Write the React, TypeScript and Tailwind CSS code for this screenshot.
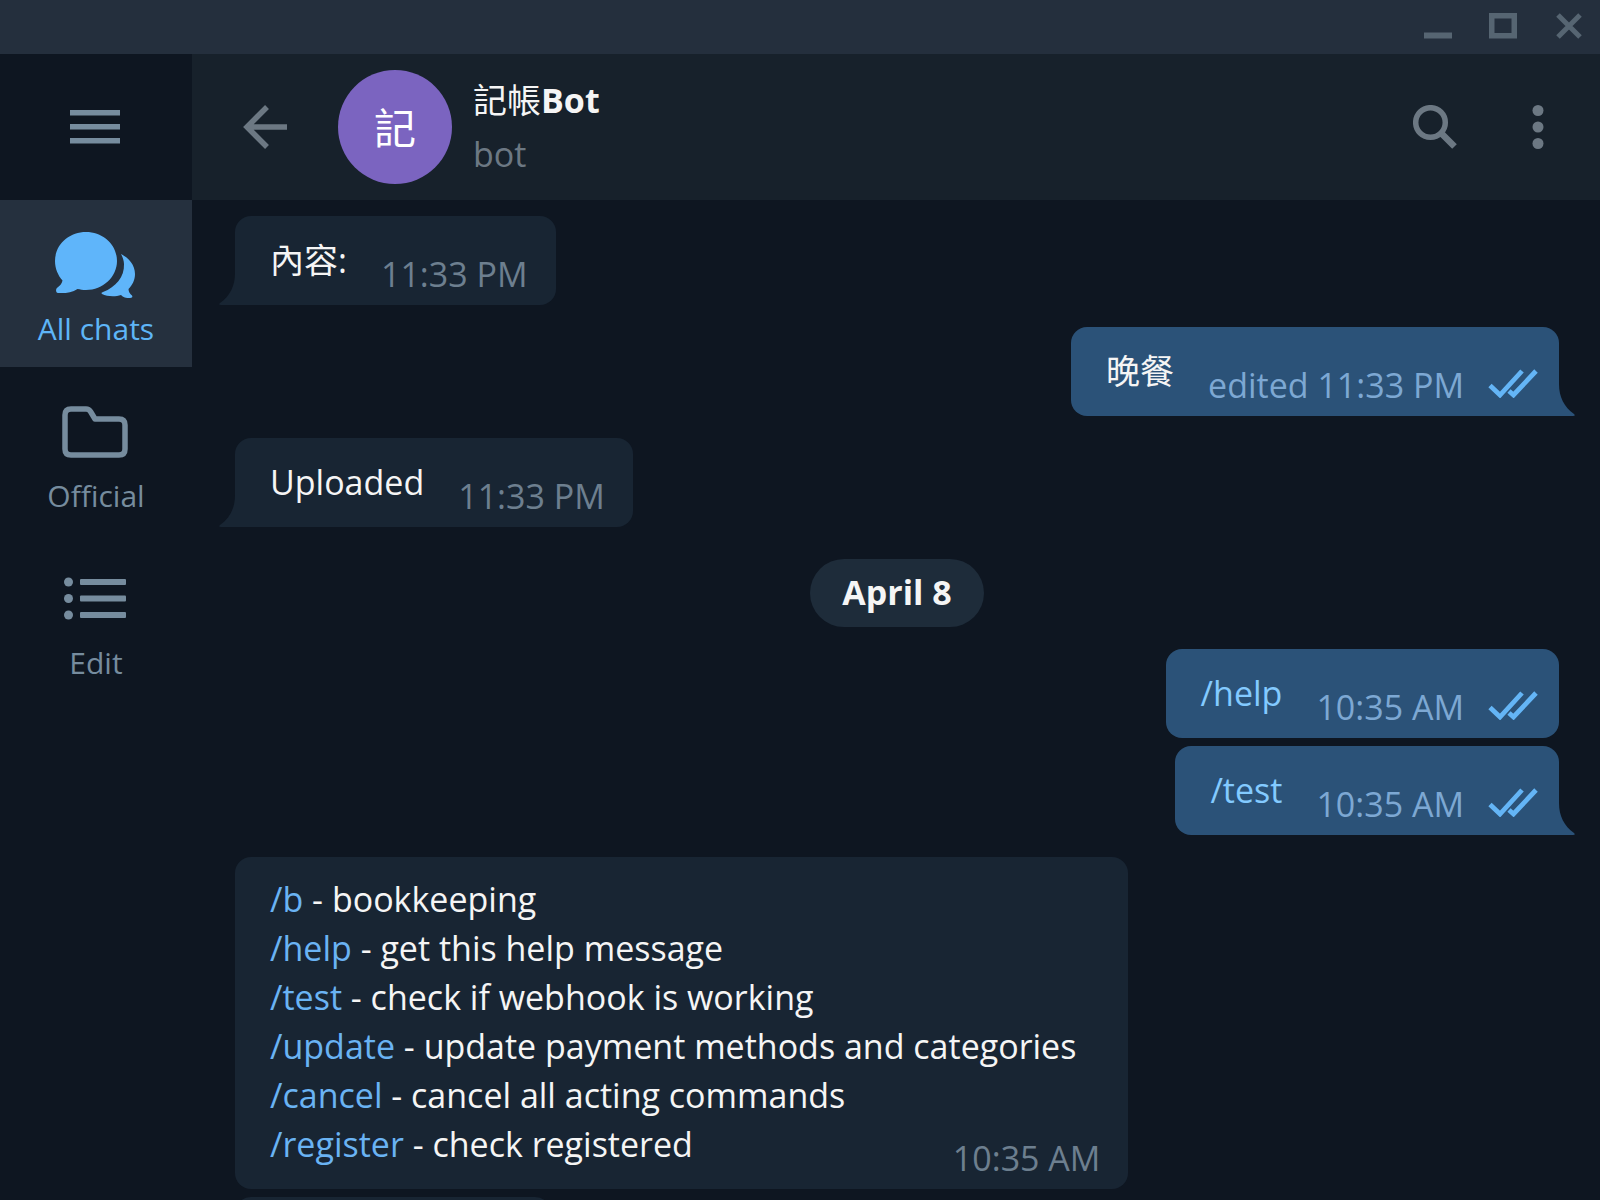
import React from "react";

type Line = { command?: string; text?: string };

type Message = {
  id: number;
  out?: boolean;
  tail?: boolean;
  lines: Line[];
  edited?: boolean;
  time: string;
  gap: string;
};

const before: Message[] = [
  { id: 1, tail: true, lines: [{ text: "內容:" }], time: "11:33 PM", gap: "mt-4" },
  { id: 2, out: true, tail: true, lines: [{ text: "晚餐" }], edited: true, time: "11:33 PM", gap: "mt-[22px]" },
  { id: 3, tail: true, lines: [{ text: "Uploaded" }], time: "11:33 PM", gap: "mt-[22px]" },
];

const after: Message[] = [
  { id: 4, out: true, lines: [{ command: "/help" }], time: "10:35 AM", gap: "mt-[22px]" },
  { id: 5, out: true, tail: true, lines: [{ command: "/test" }], time: "10:35 AM", gap: "mt-2" },
  {
    id: 6,
    lines: [
      { command: "/b", text: " - bookkeeping" },
      { command: "/help", text: " - get this help message" },
      { command: "/test", text: " - check if webhook is working" },
      { command: "/update", text: " - update payment methods and categories" },
      { command: "/cancel", text: " - cancel all acting commands" },
      { command: "/register", text: " - check registered" },
    ],
    time: "10:35 AM",
    gap: "mt-[22px]",
  },
];

function Ticks() {
  return (
    <svg className="mb-3 ml-6 h-[29px] w-[50px] shrink-0" viewBox="0 0 50 29" fill="none" stroke="#64b5f6" strokeWidth="4.800" aria-label="Read">
      <path d="M2 16.500 L12 26 L34 2" />
      <path d="M21 22 L25.500 26 L48 2" />
    </svg>
  );
}

function Tail({ out }: { out?: boolean }) {
  return out ? (
    <svg className="absolute bottom-0 left-full h-8 w-4 fill-[#2b5278]" viewBox="0 0 16 32" aria-hidden="true">
      <path d="M0 0 C0 13 5 23 15 30 Q17 32 14 32 H0Z" />
    </svg>
  ) : (
    <svg className="absolute right-full bottom-0 h-8 w-4 fill-[#182533]" viewBox="0 0 16 32" aria-hidden="true">
      <path d="M16 0 C16 13 11 23 1 30 Q-1 32 2 32 H16Z" />
    </svg>
  );
}

function Bubble({ message }: { message: Message }) {
  const { out, tail, lines, edited, time, gap } = message;
  const tall = lines.length > 1;
  const corner = !tail ? "" : out ? "rounded-br-none" : "rounded-bl-none";
  return (
    <li className={`flex shrink-0 ${gap} ${out ? "justify-end" : "justify-start"}`}>
      <div
        className={`relative flex items-end rounded-2xl pl-[35px] ${corner} ${
          out ? "bg-[#2b5278] pr-[21px]" : "bg-[#182533] pr-7"
        } ${tall ? "pt-[18px] pb-5" : "py-5"}`}
      >
        {tail && <Tail out={out} />}
        <div className={tall ? "pr-6 text-[#f5f5f5]" : "text-[#f5f5f5]"}>
          {lines.map((line, i) => (
            <p key={i} className="whitespace-pre">
              {line.command && (
                <a href="#" className={out ? "text-[#83caff]" : "text-[#6ab3f3]"}>
                  {line.command}
                </a>
              )}
              {line.text}
            </p>
          ))}
        </div>
        <div
          className={`-mb-[14px] flex items-end whitespace-nowrap ${
            tall ? "absolute right-7 bottom-5" : "ml-[34px]"
          } ${out ? "text-[#7da8d3]" : "text-[#6d7f8f]"}`}
        >
          <time>{edited ? `edited ${time}` : time}</time>
          {out && <Ticks />}
        </div>
      </div>
    </li>
  );
}

function ChatsIcon() {
  return (
    <svg className="h-[66px] w-20" viewBox="0 0 80 66" fill="#5fb5fa" aria-hidden="true">
      <path d="M31 0 C48 0 62 12.500 62 29 C62 45 48 58 31 58 C28 58 25 57.500 22.500 57 C17 60.500 10 61.500 3 61 C0.500 60.500 0.500 57 2.500 55.500 C5 53.500 7 51.500 7.500 48.500 C3 43.500 0 36.500 0 29 C0 12.500 14 0 31 0Z" />
      <path d="M66 22 C74 26 80 33 80 42 C80 48 77.500 53 73.500 57 C73.500 60 75 62 77 63.500 C78 65 77 66 75 66 C71 66 68 65.500 66 63 C60 65 52 64.500 47 62 C46 61 46.500 60.500 48 60 C61 55 69.500 45 69 32 C69 28.500 67.500 25 66 22Z" />
    </svg>
  );
}

function FolderIcon() {
  return (
    <svg className="h-[52px] w-[66px]" viewBox="0 0 66 52" fill="none" stroke="#768c9e" strokeWidth="5.500" strokeLinejoin="round" aria-hidden="true">
      <path d="M9 3 H24 Q27 3 28.500 5.500 L33 13 H57 Q63 13 63 19 V43 Q63 49 57 49 H9 Q3 49 3 43 V9 Q3 3 9 3Z" />
    </svg>
  );
}

function ListIcon() {
  return (
    <svg className="h-[43px] w-[62px]" viewBox="0 0 62 43" fill="#768c9e" aria-hidden="true">
      {[5, 21.5, 38].map((y) => (
        <g key={y}>
          <circle cx="4.500" cy={y} r="4.500" />
          <rect x="16" y={y - 3} width="46" height="6" rx="1" />
        </g>
      ))}
    </svg>
  );
}

function SideTab({ label, active, children }: { label: string; active?: boolean; children: React.ReactNode }) {
  return (
    <button
      type="button"
      className={`flex h-[167px] w-full flex-col items-center pb-[18px] text-[30px] leading-10 font-medium ${
        active ? "bg-[#25303e] text-[#5eb5f7]" : "text-[#768c9e]"
      }`}
    >
      <span className="flex w-full flex-1 items-center justify-center pt-5 pr-[3px]">{children}</span>
      <span>{label}</span>
    </button>
  );
}

export default function App() {
  return (
    <div className="flex h-screen flex-col overflow-hidden bg-[#0e1621] font-['Open_Sans','Noto_Sans_CJK_TC',sans-serif] text-[34px] leading-[49px]">
      <div className="flex h-[54px] shrink-0 items-center justify-end gap-[37px] bg-[#242f3d] pr-[18px] pb-0.5 text-[#566572]">
        <button type="button" aria-label="Minimize">
          <svg className="h-[26px] w-7" viewBox="0 0 28 26" fill="currentColor">
            <path d="M0 19.500H28V25.500H0Z" />
          </svg>
        </button>
        <button type="button" aria-label="Maximize">
          <svg className="h-[26px] w-7" viewBox="0 0 28 26" fill="none" stroke="currentColor" strokeWidth="5.500">
            <path d="M2.750 2.750H25.250V22.750H2.750Z" />
          </svg>
        </button>
        <button type="button" aria-label="Close">
          <svg className="h-[26px] w-7" viewBox="0 0 28 26" fill="none" stroke="currentColor" strokeWidth="5">
            <path d="M4 2 L26 24 M26 2 L4 24" />
          </svg>
        </button>
      </div>

      <div className="flex min-h-0 flex-1">
        <nav className="flex w-48 shrink-0 flex-col">
          <button type="button" aria-label="Menu" className="flex h-[146px] items-center justify-center pr-[3px]">
            <svg className="h-[34px] w-[50px]" viewBox="0 0 50 34" fill="#768c9e">
              <path d="M0 0H50V5.500H0Z M0 14H50V19.500H0Z M0 28H50V33.500H0Z" />
            </svg>
          </button>
          <SideTab label="All chats" active>
            <ChatsIcon />
          </SideTab>
          <SideTab label="Official">
            <FolderIcon />
          </SideTab>
          <SideTab label="Edit">
            <ListIcon />
          </SideTab>
        </nav>

        <main className="flex min-w-0 flex-1 flex-col">
          <header className="flex h-[146px] shrink-0 items-center bg-[#17212b] pr-14 pl-[51px] text-[#6c7883]">
            <button type="button" aria-label="Back">
              <svg className="h-11 w-11" viewBox="0 0 44 44" fill="none" stroke="currentColor" strokeWidth="5.500">
                <path d="M44 22 H4 M24 2 L4 22 L24 42" />
              </svg>
            </button>
            <div className="ml-[51px] flex h-[114px] w-[114px] items-center justify-center rounded-full bg-[#7b64c0] text-[42px] text-white">
              記
            </div>
            <div className="ml-[21px] flex-1">
              <h1 className="leading-[54px] font-bold text-[#f5f5f5]">
                <span className="font-normal">記帳</span>Bot
              </h1>
              <p className="leading-[54px]">bot</p>
            </div>
            <button type="button" aria-label="Search">
              <svg className="h-11 w-11" viewBox="0 0 44 44" fill="none" stroke="currentColor" strokeWidth="5.500">
                <circle cx="17.500" cy="17.500" r="14.800" />
                <path d="M29 29 L41.500 41.500" strokeWidth="6.500" />
              </svg>
            </button>
            <button type="button" aria-label="More" className="ml-[75px]">
              <svg className="h-11 w-3" viewBox="0 0 12 44" fill="currentColor">
                <circle cx="6" cy="5.500" r="5.500" />
                <circle cx="6" cy="22" r="5.500" />
                <circle cx="6" cy="38.500" r="5.500" />
              </svg>
            </button>
          </header>

          <section className="min-h-0 flex-1 overflow-hidden pr-[41px] pl-[43px]">
            <ol className="flex flex-col">
              {before.map((m) => (
                <Bubble key={m.id} message={m} />
              ))}
              <li className="mt-8 flex justify-center">
                <span className="rounded-full bg-[#1e2c3a] px-8 pt-[9px] pb-[10px] font-bold text-[#f5f5f5]">April 8</span>
              </li>
              {after.map((m) => (
                <Bubble key={m.id} message={m} />
              ))}
              <li className="mt-2 h-[89px] w-[316px] shrink-0 rounded-2xl bg-[#182533]" />
            </ol>
          </section>
        </main>
      </div>
    </div>
  );
}
